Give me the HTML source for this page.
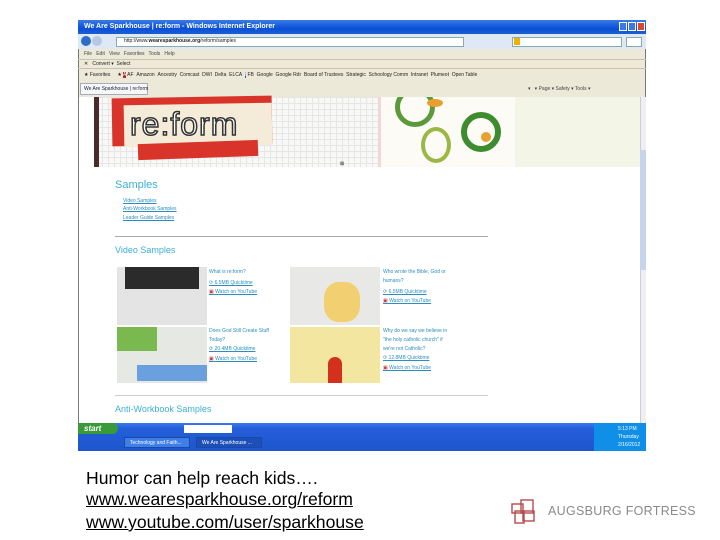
<!DOCTYPE html>
<html><head><meta charset="utf-8"><style>
*{margin:0;padding:0;box-sizing:border-box}
body{width:720px;height:540px;background:#fff;position:relative;overflow:hidden;font-family:"Liberation Sans",sans-serif}
.a{position:absolute}
.sm{font-size:5px;color:#222;white-space:nowrap}
.lk{font-size:5px;color:#2a8fc0;text-decoration:underline;white-space:nowrap}
.t{font-size:5px;color:#2a8fc0;line-height:9px}
.b{font-size:17.6px;color:#000;position:absolute;left:86px;white-space:nowrap}
.u{text-decoration:underline}
</style></head><body>
<div class="a" style="left:78px;top:20px;width:568px;height:431px;background:#ece9d8;border:1px solid #777"></div>
<div class="a" style="left:78px;top:20px;width:568px;height:14px;background:linear-gradient(#3a7be8,#0a4fd8 60%,#1c5fd0)"></div>
<div class="a" style="left:84px;top:23px;font-size:7px;color:#fff;font-weight:bold">We Are Sparkhouse | re:form - Windows Internet Explorer</div>
<div class="a" style="left:619px;top:22px;width:8px;height:9px;background:#3b77e6;border:1px solid #fff"></div>
<div class="a" style="left:628px;top:22px;width:8px;height:9px;background:#3b77e6;border:1px solid #fff"></div>
<div class="a" style="left:637px;top:22px;width:8px;height:9px;background:#d8482b;border:1px solid #fff"></div>
<div class="a" style="left:78px;top:34px;width:568px;height:15px;background:#dfe8f5"></div>
<div class="a" style="left:81px;top:36px;width:10px;height:10px;border-radius:50%;background:#2f6bc8"></div>
<div class="a" style="left:92px;top:36px;width:10px;height:10px;border-radius:50%;background:#b8c8e0"></div>
<div class="a" style="left:116px;top:37px;width:348px;height:10px;background:#fff;border:1px solid #8aa"></div>
<div class="a sm" style="left:124px;top:38px">http://www.<b>wearesparkhouse.org</b>/reform/samples</div>
<div class="a" style="left:512px;top:37px;width:110px;height:10px;background:#fff;border:1px solid #8aa"></div>
<div class="a" style="left:514px;top:38px;width:6px;height:7px;background:#f0b000"></div>
<div class="a" style="left:626px;top:37px;width:16px;height:10px;background:#fff;border:1px solid #8aa"></div>
<div class="a sm" style="left:84px;top:51px;color:#444">File &nbsp; Edit &nbsp; View &nbsp; Favorites &nbsp; Tools &nbsp; Help</div>
<div class="a" style="left:78px;top:59px;width:568px;height:1px;background:#c8c4b0"></div>
<div class="a sm" style="left:84px;top:61px">✕ &nbsp; Convert ▾ &nbsp;Select</div>
<div class="a" style="left:78px;top:68px;width:568px;height:1px;background:#c8c4b0"></div>
<div class="a sm" style="left:84px;top:72px">★ Favorites &nbsp;&nbsp;&nbsp; ★ <span style="background:#b22;color:#fff">A</span> AF &nbsp;Amazon &nbsp;Ancestry &nbsp;Comcast &nbsp;DWI &nbsp;Delta &nbsp;ELCA &nbsp;<span style="background:#3b5998;color:#fff">f</span> FB &nbsp;Google &nbsp;Google Rdr &nbsp;Board of Trustees &nbsp;Strategic &nbsp;Schoology Comm &nbsp;Intranet &nbsp;Plumeot &nbsp;Open Table</div>
<div class="a" style="left:80px;top:83px;width:68px;height:12px;background:#f4f7fc;border:1px solid #aab"></div>
<div class="a sm" style="left:84px;top:86px">We Are Sparkhouse | re:form</div>
<div class="a sm" style="left:528px;top:86px;color:#444">▾ &nbsp; ▾ Page ▾ Safety ▾ Tools ▾</div>
<div class="a" style="left:79px;top:97px;width:561px;height:326px;background:#fff"></div>
<div class="a" style="left:476px;top:97px;width:164px;height:70px;background:#f3f5e6"></div>
<div class="a" style="left:96px;top:97px;width:380px;height:70px;background:#f8f8f6;background-image:linear-gradient(#e6e6e6 1px,transparent 1px),linear-gradient(90deg,#e6e6e6 1px,transparent 1px);background-size:6px 6px"></div>
<div class="a" style="left:94px;top:97px;width:5px;height:70px;background:#4a2a2a"></div>
<div class="a" style="left:112px;top:97px;width:160px;height:48px;background:#d8342a;transform:rotate(-1deg)"></div>
<div class="a" style="left:124px;top:104px;width:148px;height:42px;background:#f4ecd8;transform:rotate(-1deg)"></div>
<div class="a" style="left:138px;top:142px;width:120px;height:16px;background:#d8342a;transform:rotate(-2deg)"></div>
<div class="a" style="left:130px;top:106px;font-size:32px;color:#fff;-webkit-text-stroke:1.5px #333;letter-spacing:1px">re:form</div>
<div class="a" style="left:378px;top:97px;width:137px;height:70px;background:#fdfbf6;border-left:3px solid #f2d6dc;overflow:hidden">
<div class="a" style="left:14px;top:-10px;width:40px;height:40px;border-radius:50%;border:5px solid #5a9a3a"></div>
<div class="a" style="left:80px;top:15px;width:40px;height:40px;border-radius:50%;border:6px solid #3d8c2e"></div>
<div class="a" style="left:40px;top:30px;width:30px;height:36px;border-radius:50%;border:4px solid #9bb844"></div>
<div class="a" style="left:46px;top:2px;width:16px;height:8px;background:#e8a030;border-radius:50%"></div>
<div class="a" style="left:100px;top:35px;width:10px;height:10px;background:#e8a030;border-radius:50%"></div>
</div>
<div class="a sm" style="left:340px;top:161px">⊠</div>
<div class="a" style="left:115px;top:179px;font-size:11px;color:#3ab0d4">Samples</div>
<div class="a lk" style="left:123px;top:198px">Video Samples</div>
<div class="a lk" style="left:123px;top:206px">Anti-Workbook Samples</div>
<div class="a lk" style="left:123px;top:215px">Leader Guide Samples</div>
<div class="a" style="left:115px;top:236px;width:373px;height:1px;background:#aaa"></div>
<div class="a" style="left:115px;top:245px;font-size:9px;color:#3ab0d4">Video Samples</div>
<div class="a" style="left:117px;top:267px;width:90px;height:58px;background:#e4e4e4"><div style="height:22px;margin:0 8px;background:#2b2b2b"></div></div>
<div class="a" style="left:290px;top:267px;width:90px;height:58px;background:#e8e8e6"><div style="position:absolute;left:34px;top:15px;width:36px;height:40px;background:#f2cf70;border-radius:40%"></div></div>
<div class="a" style="left:117px;top:327px;width:90px;height:56px;background:#e6e8e4"><div style="position:absolute;left:0;top:0;width:40px;height:24px;background:#7ab850"></div><div style="position:absolute;left:20px;top:38px;width:70px;height:16px;background:#6aa0e0"></div></div>
<div class="a" style="left:290px;top:327px;width:90px;height:56px;background:#f3e6a0"><div style="position:absolute;left:38px;top:30px;width:14px;height:26px;background:#d43020;border-radius:7px 7px 0 0"></div></div>
<div class="a t" style="left:209px;top:268px">What is re:form?</div>
<div class="a lk" style="left:209px;top:280px">⟳ 6.5MB Quicktime</div>
<div class="a lk" style="left:209px;top:289px"><span style="color:#c33">▣</span> Watch on YouTube</div>
<div class="a t" style="left:383px;top:268px">Who wrote the Bible, God or<br>humans?</div>
<div class="a lk" style="left:383px;top:289px">⟳ 6.5MB Quicktime</div>
<div class="a lk" style="left:383px;top:298px"><span style="color:#c33">▣</span> Watch on YouTube</div>
<div class="a t" style="left:209px;top:327px">Does God Still Create Stuff<br>Today?</div>
<div class="a lk" style="left:209px;top:346px">⟳ 20.4MB Quicktime</div>
<div class="a lk" style="left:209px;top:356px"><span style="color:#c33">▣</span> Watch on YouTube</div>
<div class="a t" style="left:383px;top:327px">Why do we say we believe in<br>"the holy catholic church" if<br>we're not Catholic?</div>
<div class="a lk" style="left:383px;top:355px">⟳ 12.8MB Quicktime</div>
<div class="a lk" style="left:383px;top:365px"><span style="color:#c33">▣</span> Watch on YouTube</div>
<div class="a" style="left:115px;top:395px;width:373px;height:1px;background:#ccc"></div>
<div class="a" style="left:115px;top:404px;font-size:9px;color:#3ab0d4">Anti-Workbook Samples</div>
<div class="a" style="left:640px;top:97px;width:6px;height:326px;background:#eef0f4;border-left:1px solid #ccd"></div>
<div class="a" style="left:640px;top:150px;width:6px;height:120px;background:#c6d4ee"></div>
<div class="a" style="left:78px;top:423px;width:568px;height:28px;background:linear-gradient(#3a7bea,#245edb 20%,#1f55cc)"></div>
<div class="a" style="left:78px;top:423px;width:40px;height:11px;background:#3a9a3a;border-radius:0 6px 6px 0"></div>
<div class="a" style="left:84px;top:424px;font-size:8px;color:#fff;font-style:italic;font-weight:bold">start</div>
<div class="a" style="left:184px;top:425px;width:48px;height:8px;background:#fff"></div>
<div class="a" style="left:124px;top:437px;width:66px;height:11px;background:#3f7ee8;border:1px solid #1a4aa8"></div>
<div class="a" style="left:196px;top:437px;width:66px;height:11px;background:#1d4fb8;border:1px solid #1a4aa8"></div>
<div class="a sm" style="left:130px;top:440px;color:#fff">Technology and Faith...</div>
<div class="a sm" style="left:202px;top:440px;color:#fff">We Are Sparkhouse ...</div>
<div class="a" style="left:594px;top:423px;width:52px;height:28px;background:#0f8fe8"></div>
<div class="a sm" style="left:618px;top:425px;color:#fff;line-height:8px">5:13 PM<br>Thursday<br>2/16/2012</div>
<div class="b" style="top:468px">Humor can help reach kids….</div>
<div class="b u" style="top:489px">www.wearesparkhouse.org/reform</div>
<div class="b u" style="top:512px">www.youtube.com/user/sparkhouse</div>
<svg class="a" style="left:511px;top:499px" width="26" height="26" viewBox="0 0 26 26" fill="none" stroke="#b5494b" stroke-width="1.4"><rect x="1" y="5" width="11" height="9"/><rect x="10" y="1" width="12" height="13"/><rect x="4" y="12" width="9" height="12"/><rect x="12" y="12" width="11" height="10"/></svg>
<div class="a" style="left:548px;top:504px;font-size:12.5px;color:#8a8a8a;letter-spacing:0.3px;white-space:nowrap">AUGSBURG FORTRESS</div>
</body></html>
